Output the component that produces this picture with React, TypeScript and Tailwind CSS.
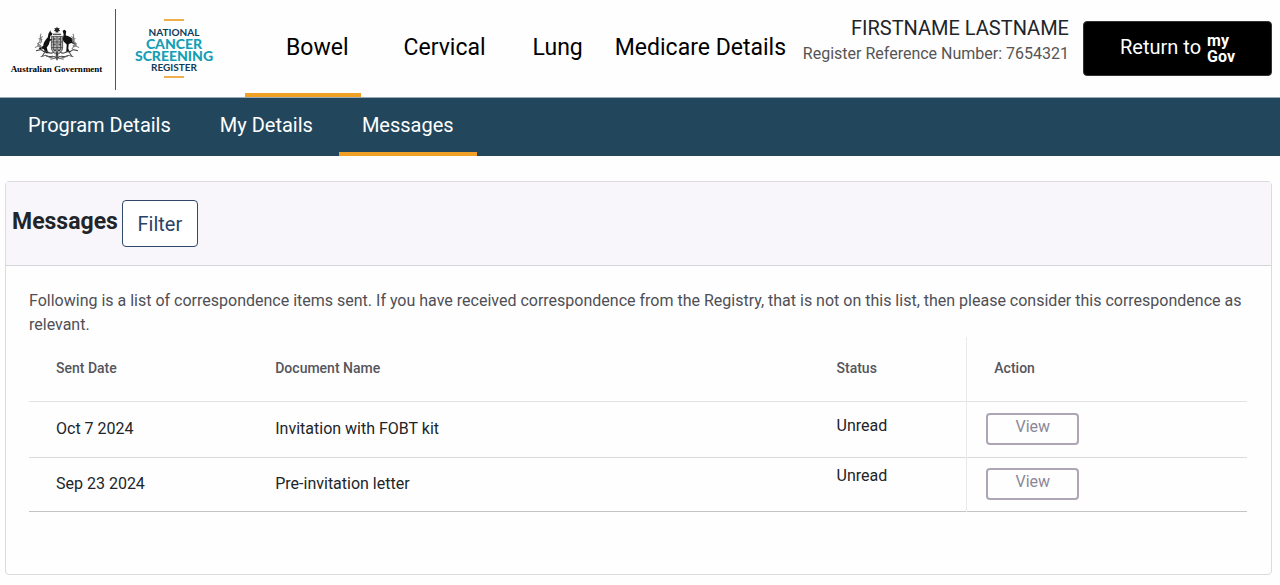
import { useState } from 'react';

const programs = [
  { name: 'Bowel', className: 'pl-[41px] pr-3' },
  { name: 'Cervical', className: 'pl-[43px] pr-6' },
  { name: 'Lung', className: 'pl-[23px] pr-6' },
  { name: 'Medicare Details', className: 'pl-2' },
];

const sections = ['Program Details', 'My Details', 'Messages'];

const messages = [
  { date: 'Oct 7 2024', document: 'Invitation with FOBT kit', status: 'Unread', className: 'h-14', statusClass: 'pt-3' },
  { date: 'Sep 23 2024', document: 'Pre-invitation letter', status: 'Unread', className: 'h-[54px]', statusClass: 'pt-[6px]' },
];

function CoatOfArms() {
  return (
    <svg viewBox="0 0 90 68" className="w-[46px] h-[35px]" fill="none" stroke="#444" strokeWidth="1.6" aria-hidden="true">
      {/* star and wreath */}
      <path d="M45 1l1.6 3.4 3.6-.8-1.4 3.4 2.6 2.4-3.8.6-.4 3.8-2.2-2.8-2.2 2.8-.4-3.8-3.8-.6 2.6-2.4-1.4-3.4 3.6.8z" fill="#222" stroke="none" />
      <path d="M37 16h16" strokeWidth="2.4" />
      {/* shield */}
      <path d="M34 20h22v22c0 7-5 11-11 14-6-3-11-7-11-14z" fill="#b4b4b4" />
      <path d="M45 20v35M34 31h22M34 42h22M38 20v27M52 20v27" />
      <path d="M37 25h5M48 25h5M37 36h5M48 36h5M39 47h4M47 47h4" strokeWidth="3" />
      {/* kangaroo */}
      <path d="M32 8l1 4 3 2-1 4-3 1-1 6 5 1-5 3-2 7-4 6 2 8 4 3h-8l-4-8-7 1-3-3 9-4c1-9 6-13 9-17 1-5 1-8 3-10z" fill="#111" stroke="none" />
      {/* emu */}
      <path d="M56 9l4-2 3 3-1 8c5 2 13 4 15 10l4 9-8-4-5 2-1 9 3 7h-7l1-15-5-5c-4-4-2-9-1-15z" fill="#111" stroke="none" />
      {/* wattle branches */}
      <path d="M14 15c-3 5-2 9 2 12M9 24c4 0 6 4 6 8M17 20c-6 3-7 9-4 14M6 34l8 5M2 42c6-5 11-3 14 3M10 31l-3 8M76 15c3 5 2 9-2 12M81 24c-4 0-6 4-6 8M73 20c6 3 7 9 4 14M84 34l-8 5M88 42c-6-5-11-3-14 3M80 31l3 8" stroke="#777" strokeWidth="2" />
      <path d="M4 48l9-2 8 5-5 8M18 50c8-5 13 8 21 1M24 58c7 5 13-3 19 4M86 48l-9-2-8 5 5 8M72 50c-8-5-13 8-21 1M66 58c-7 5-13-3-19 4" strokeWidth="2" />
      <path d="M13 60l10-3 9 5 13-4 13 4 9-5 10 3M32 65l13-3 13 3" stroke="#666" strokeWidth="2" />
      <path d="M45 50v17" stroke="#222" strokeWidth="2.4" />
    </svg>
  );
}

function RegisterLogo() {
  return (
    <div className="flex w-20 flex-col items-center font-['Lato',sans-serif] text-[#0e3a5a]">
      <span className="h-[2px] w-5 bg-[#eeb04c]" />
      <span className="mt-[5px] text-[10px] leading-[12px] font-bold">NATIONAL</span>
      <span className="text-[14px] leading-[12px] font-black text-[#149fb5]">CANCER</span>
      <span className="text-[14px] leading-[12px] font-black text-[#149fb5]">SCREENING</span>
      <span className="text-[10px] leading-[10px] font-bold">REGISTER</span>
      <span className="mt-[4px] h-[2px] w-5 bg-[#eeb04c]" />
    </div>
  );
}

export default function App() {
  const [program, setProgram] = useState('Bowel');
  const [section, setSection] = useState('Messages');

  return (
    <div className="min-h-screen bg-[#fefefe] pb-2 font-['Roboto',sans-serif] text-[#212529]">
      <header className="flex h-[97px] justify-between">
        <div className="flex">
          <div className="flex items-center pt-[2px]">
            <div className="flex w-[115px] flex-col items-center pr-[2px] pt-[2px]">
              <CoatOfArms />
              <span className="mt-[2px] font-['Liberation_Serif',serif] text-[9px] leading-[12px] font-bold whitespace-nowrap text-black">
                Australian Government
              </span>
            </div>
            <div className="h-[81px] w-px bg-[#555]" />
          </div>
          <div className="flex items-center pl-[18px]">
            <RegisterLogo />
          </div>
          <nav className="ml-[31px] flex text-[23px] text-black">
            {programs.map((p) => (
              <button
                key={p.name}
                type="button"
                onClick={() => setProgram(p.name)}
                className={`border-b-4 pt-[3px] whitespace-nowrap ${p.className} ${program === p.name ? 'border-[#f0a125]' : 'border-transparent'}`}
              >
                {p.name}
              </button>
            ))}
          </nav>
        </div>
        <div className="flex items-start pr-2">
          <div className="pt-4 text-right whitespace-nowrap">
            <p className="text-[20px] leading-6">FIRSTNAME LASTNAME</p>
            <p className="text-[16px] leading-7 text-[#555]">Register Reference Number: 7654321</p>
          </div>
          <button
            type="button"
            className="mt-[21px] ml-[14px] flex h-[55px] w-[189px] items-center justify-center gap-[6px] rounded border border-[#333] bg-black text-[20px] text-white"
          >
            <span className="pb-[3px]">Return to</span>
            <span className="text-left text-[16px] leading-4 font-bold">
              my
              <br />
              Gov
            </span>
          </button>
        </div>
      </header>

      <nav className="flex h-[59px] gap-[3px] border-t border-[#9aabb8] bg-[#22475c] pl-[5px] text-[20px] text-white">
        {sections.map((s) => (
          <button
            key={s}
            type="button"
            onClick={() => setSection(s)}
            className={`border-b-4 px-[23px] ${section === s ? 'border-[#f0a125]' : 'border-transparent'}`}
          >
            {s}
          </button>
        ))}
      </nav>

      <main className="mt-[25px] mr-2 ml-[5px] rounded border border-[#dcdadf] pb-[62px]">
        <div className="flex h-[84px] items-center gap-1 border-b border-[#d6d4d9] bg-[#f8f6fa] pl-[6px]">
          <h1 className="pb-[2px] text-[23px] font-bold">Messages</h1>
          <button type="button" className="h-[47px] w-[76px] rounded border border-[#2f4768] bg-white text-[20px] text-[#2b4268]">
            Filter
          </button>
        </div>
        <div className="pr-6 pl-[23px]">
          <p className="pt-[23px] text-[16px] leading-6 text-[#4f4f55]">
            Following is a list of correspondence items sent. If you have received correspondence from the Registry, that
            is not on this list, then please consider this correspondence as relevant.
          </p>
          <table className="w-full table-fixed border-collapse text-left text-[16px]">
            <thead className="text-[14px] text-[#55555c]">
              <tr className="h-16 border-b border-[#e4e2e6]">
                <th className="w-[18%] pl-[27px] font-medium">Sent Date</th>
                <th className="w-[46%] pl-[27px] font-medium">Document Name</th>
                <th className="w-[13%] pl-7 font-medium">Status</th>
                <th className="border-l border-[#ebe9ec] pl-[27px] font-medium">Action</th>
              </tr>
            </thead>
            <tbody>
              {messages.map((m) => (
                <tr key={m.date} className={`border-b border-[#dcd8de] last:border-[#c4c4c8] ${m.className}`}>
                  <td className="pl-[27px]">{m.date}</td>
                  <td className="pl-[27px]">{m.document}</td>
                  <td className={`pl-7 align-top ${m.statusClass}`}>{m.status}</td>
                  <td className="border-l border-[#ebe9ec] pl-[19px]">
                    <button
                      type="button"
                      className="block h-8 w-[93px] rounded border-2 border-[#aea6b6] pb-1 leading-6 text-[#8c8798]"
                    >
                      View
                    </button>
                  </td>
                </tr>
              ))}
            </tbody>
          </table>
        </div>
      </main>
    </div>
  );
}
